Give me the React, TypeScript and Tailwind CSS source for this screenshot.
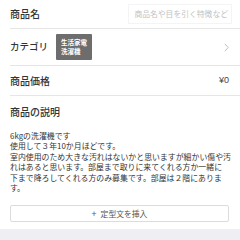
import * as React from "react";

const lines = [
  "6kgの洗濯機です",
  "使用して３年10か月ほどです。",
  "室内使用のため大きな汚れはないかと思いますが細かい傷や汚",
  "れはあると思います。部屋まで取りに来てくれる方か一緒に",
  "下まで降ろしてくれる方のみ募集です。部屋は２階にありま",
  "す。",
];

export default function App() {
  return (
    <div
      className="w-[240px] h-[240px] overflow-hidden bg-white text-[#333]"
      style={{ fontFamily: '"Noto Sans CJK JP", "Noto Sans", sans-serif' }}
    >
      <div className="pl-[10px]">
        {/* 商品名 */}
        <div className="flex h-[29px] items-center justify-between border-b border-[#e6e6e6] pr-[8px]">
          <span className="text-[10px] font-medium leading-none">商品名</span>
          <div className="flex h-[20px] w-[104px] items-center justify-end border border-[#f4f4f4] pr-[3px] text-[7.8px] text-[#c2c2c2]">
            商品名や目を引く特徴など
          </div>
        </div>

        {/* カテゴリ */}
        <div className="flex h-[37px] items-center border-b border-[#e6e6e6] pr-[11px]">
          <span className="w-[46px] text-[9.5px] font-medium leading-none">カテゴリ</span>
          <div className="flex h-[26px] w-[36px] flex-col justify-center rounded-[1px] bg-[#6d6d6d] pl-[5px] text-[6.5px] font-bold leading-[9px] text-white">
            <span>生活家電</span>
            <span>洗濯機</span>
          </div>
          <svg className="ml-auto" width="5" height="9" viewBox="0 0 5 9">
            <path d="M0.8 0.8 L4.2 4.5 L0.8 8.2" fill="none" stroke="#b5b5b5" strokeWidth="0.9" />
          </svg>
        </div>

        {/* 商品価格 */}
        <div className="flex h-[30px] items-center justify-between border-b border-[#e6e6e6] pr-[11px]">
          <span className="text-[10px] font-medium leading-none">商品価格</span>
          <span className="text-[9px] leading-none text-[#444]" style={{ fontFamily: '"Liberation Sans", sans-serif' }}>
            ¥0
          </span>
        </div>

        {/* 商品の説明 */}
        <div className="pr-[11px] pt-[10px]">
          <div className="text-[10px] font-medium leading-[12px]">商品の説明</div>
          <div className="mt-[13px] text-[7.9px] leading-[10.4px] text-[#333]">
            {lines.map((l) => (
              <div key={l} className="whitespace-nowrap">
                {l}
              </div>
            ))}
          </div>
          <button className="mt-[12px] flex h-[17px] w-full items-center justify-center gap-[4px] rounded-[2px] border border-[#dcdcdc] text-[7.8px] text-[#555]">
            <span className="text-[9px] leading-none">+</span>
            <span>定型文を挿入</span>
          </button>
        </div>
      </div>
      <div className="mt-[7px] h-[20px] bg-[#efeff3]" />
    </div>
  );
}
